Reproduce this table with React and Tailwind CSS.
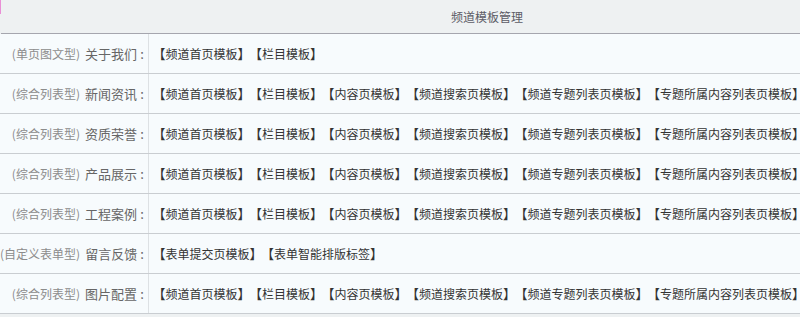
import React from "react";

const FULL = ["频道首页模板", "栏目模板", "内容页模板", "频道搜索页模板", "频道专题列表页模板", "专题所属内容列表页模板"];

const rows = [
  { type: "(单页图文型)", name: "关于我们", links: ["频道首页模板", "栏目模板"] },
  { type: "(综合列表型)", name: "新闻资讯", links: FULL },
  { type: "(综合列表型)", name: "资质荣誉", links: FULL },
  { type: "(综合列表型)", name: "产品展示", links: FULL },
  { type: "(综合列表型)", name: "工程案例", links: FULL },
  { type: "(自定义表单型)", name: "留言反馈", links: ["表单提交页模板", "表单智能排版标签"] },
  { type: "(综合列表型)", name: "图片配置", links: FULL },
];

const font = { fontFamily: '"Noto Sans CJK SC", "Microsoft YaHei", sans-serif' };

function Link({ text }) {
  return (
    <span className="flex items-center whitespace-nowrap">
      <span className="inline-block w-[6.5px] whitespace-nowrap text-[13px] font-['Noto_Sans_CJK_JP',sans-serif] [font-feature-settings:'halt']">【</span>
      <span className="inline-block">{text}</span>
      <span className="inline-block w-[6.5px] whitespace-nowrap text-[13px] font-['Noto_Sans_CJK_JP',sans-serif] [font-feature-settings:'halt']">】</span>
    </span>
  );
}

export default function App() {
  return (
    <div className="relative w-[800px] h-[317px] overflow-hidden bg-[#eef1f2]" style={font}>
      <div className="absolute left-0 top-0 w-[1px] h-[14px] bg-[#e98fd6]" />
      <div className="h-[33px] ml-[1px] bg-[#eef1f2] flex items-center pl-[450px] text-[12px] text-[#5c5c66] border-b border-[#a5a6ae] box-content">
        频道模板管理
      </div>
      {rows.map((r, i) => (
        <div key={i} className="flex h-[39px] bg-[#f7fbfd] border-b border-[#c9cdd1] box-content">
          <div className="w-[149px] shrink-0 flex items-center justify-end pr-[1px] border-r border-[#dde1e4] whitespace-nowrap">
            <span className="text-[12px] text-[#8c8c8c]">{r.type}</span>
            <span className="text-[13px] text-[#666] ml-[5px]">{r.name}</span>
            <span className="inline-block w-[10px] text-center text-[13px] text-[#666]">:</span>
          </div>
          <div className="flex items-center pl-[10px] whitespace-nowrap text-[12px] text-[#333] gap-[11.5px]">
            {r.links.map((l, j) => (
              <Link key={j} text={l} />
            ))}
          </div>
        </div>
      ))}
    </div>
  );
}
